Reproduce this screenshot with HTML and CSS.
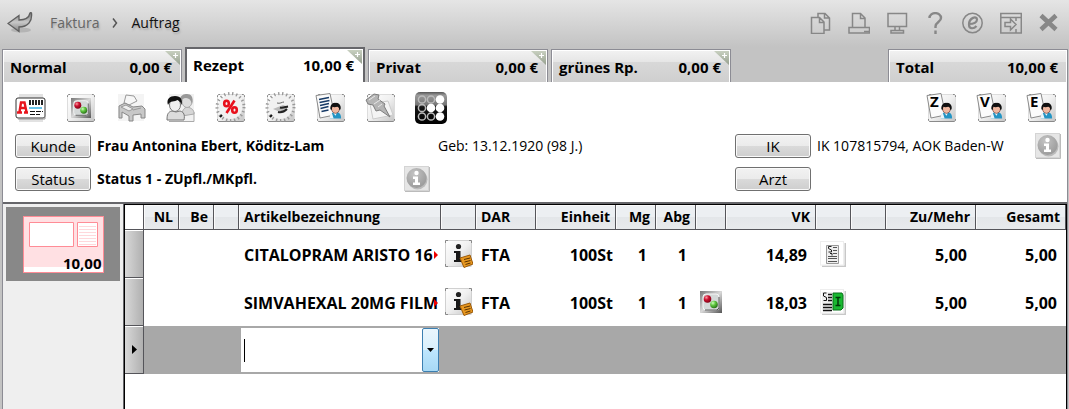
FILE: index.html
```html
<!DOCTYPE html>
<html lang="de">
<head>
<meta charset="utf-8">
<title>Faktura – Auftrag</title>
<link rel="stylesheet" href="styles.css">
</head>
<body>
<svg class="defs" aria-hidden="true">
  <defs>
    <linearGradient id="g-tile" x1="0" y1="0" x2="1" y2="1"><stop offset="0" stop-color="#fff"/><stop offset=".5" stop-color="#f0f0f0"/><stop offset="1" stop-color="#c4c4c4"/></linearGradient>
    <linearGradient id="g-metal" x1="0" y1="0" x2="1" y2="1"><stop offset="0" stop-color="#777"/><stop offset=".5" stop-color="#d8d8d8"/><stop offset="1" stop-color="#555"/></linearGradient>
    <linearGradient id="g-arrow" x1="0" y1="0" x2="0" y2="1"><stop offset="0" stop-color="#777"/><stop offset=".5" stop-color="#c8c8c8"/><stop offset="1" stop-color="#858585"/></linearGradient>
    <linearGradient id="g-black" x1="0" y1="0" x2="0" y2="1"><stop offset="0" stop-color="#555"/><stop offset=".1" stop-color="#999"/><stop offset=".4" stop-color="#777"/><stop offset=".46" stop-color="#161616"/><stop offset="1" stop-color="#000"/></linearGradient>
    <linearGradient id="g-corner" x1="0" y1="0" x2="0" y2="1"><stop offset="0" stop-color="#c8d0c0"/><stop offset="1" stop-color="#96a08f"/></linearGradient>
    <radialGradient id="g-red" cx=".35" cy=".3" r=".8"><stop offset="0" stop-color="#ff9aa0"/><stop offset=".4" stop-color="#cc1030"/><stop offset="1" stop-color="#700010"/></radialGradient>
    <radialGradient id="g-green" cx=".35" cy=".3" r=".8"><stop offset="0" stop-color="#d0ffc0"/><stop offset=".4" stop-color="#60c840"/><stop offset="1" stop-color="#206010"/></radialGradient>
    <radialGradient id="g-grey" cx=".4" cy=".3" r=".8"><stop offset="0" stop-color="#c4c4c4"/><stop offset="1" stop-color="#969696"/></radialGradient>
    <symbol id="tile" viewBox="0 0 32 32">
      <rect x="2.500" y="2.500" width="27" height="27" rx="2" fill="url(#g-tile)" stroke="#ddd"/>
      <path d="M2.500 5V3.500l1-1H5M27 2.500h1.500l1 1V5M2.500 27v1.500l1 1H28l1.500-1V27" fill="none" stroke="#8a8a8a"/>
    </symbol>
    <symbol id="pills" viewBox="0 0 22 22">
      <rect width="22" height="22" fill="url(#g-metal)"/>
      <rect x="3" y="3" width="16" height="16" rx="3" fill="#d4d8d8" stroke="#f6f6f6"/>
      <path d="M5 19h12l2-2V6" fill="none" stroke="#555"/>
      <circle cx="7.500" cy="8" r="3.800" fill="url(#g-red)"/><circle cx="14" cy="13.500" r="3.800" fill="url(#g-green)"/>
    </symbol>
    <symbol id="burst" viewBox="0 0 32 32">
      <use href="#tile"/>
      <circle cx="15.500" cy="15" r="13" fill="none" stroke="#999" stroke-width="4" stroke-dasharray="1.300 2.600"/>
      <circle cx="15.500" cy="15" r="12" fill="#f1f1f1"/>
      <path d="M5 25l2-2" stroke="#111" stroke-width="2"/>
    </symbol>
    <symbol id="person" viewBox="0 0 14 18">
      <path d="M1 17c0-4 1-6 4-7h4c3 1 4 3 4 7z" fill="#2394c4"/>
      <path d="M4 10l3 4 2-4zM1 17c0-3 0-5 2-6l2 6z" fill="#e9f5fa"/>
      <ellipse cx="7" cy="6.500" rx="4.300" ry="5" fill="#f0b8a0" stroke="#4b1c18" stroke-width=".6"/>
      <path d="M1.500 7C1 2 4 0 7 0s6.500 2 5.500 7l-1.500 1c0-2-.5-3-2-3.500C7 5 5 5 3.500 4.500L3 8z" fill="#111"/>
    </symbol>
    <symbol id="sheet" viewBox="0 0 32 32">
      <use href="#tile"/>
      <path d="M1 3.500L15 1.500 19.500 23 5 26z" fill="#fbfbfb" stroke="#8a8a8a"/>
      <use href="#person" x="14" y="10.500" width="13" height="17"/>
    </symbol>
    <symbol id="info" viewBox="0 0 26 26">
      <rect x=".5" y=".5" width="24" height="24" fill="#e6e6e6" stroke="#d4d4d4"/>
      <path d="M1 25.500h24.500V1" fill="none" stroke="#bbb"/>
      <circle cx="13.500" cy="13.500" r="10" fill="#888" opacity=".45"/>
      <circle cx="12.500" cy="12" r="10" fill="url(#g-grey)"/>
      <circle cx="12.500" cy="7" r="2.200" fill="#fff"/>
      <path d="M9 10.500h5v6h2v2.500H9v-2.500h2v-3.500H9z" fill="#fff"/>
    </symbol>
    <symbol id="note" viewBox="0 0 28 28">
      <rect x=".5" y=".5" width="26" height="26" rx="1" fill="url(#g-tile)" stroke="#d0d0d0"/>
      <path d="M.5 3V.5H3M24 .5h2.500V3M.5 24v2.500H3" fill="none" stroke="#888"/>
      <circle cx="13.500" cy="6.500" r="2.600" fill="#222"/>
      <path d="M9 11h6.500v9H18v2H9v-2h2v-7H9z" fill="#181818"/>
      <path d="M15 18l10-3 3 9-9 3.500z" fill="#e89820" stroke="#9c5a08"/>
      <path d="M19 19.500l6-1.500M19.500 22l6-1.500M20.500 24.500l5-1.500" stroke="#5a3200"/>
    </symbol>
    <symbol id="plus" viewBox="0 0 15 14">
      <path d="M0 0h15v14z" fill="url(#g-corner)"/><path d="M8 4.500h5M10.500 2v5" stroke="#fff" stroke-width="1.200"/>
    </symbol>
    <symbol id="doc" viewBox="0 0 26 26">
      <path d="M2 25.500h23.500V2" fill="none" stroke="#c8c8c8" stroke-width="2"/>
      <rect x=".5" y=".5" width="23" height="23.500" fill="#fff" stroke="#eee"/>
    </symbol>
  </defs>
</svg>

<header class="topbar">
  <button class="back" aria-label="Zurück">
    <svg width="26" height="22" viewBox="0 0 26 22"><ellipse cx="14" cy="18" rx="10" ry="2.500" fill="#999" opacity=".5"/><path d="M1 11.500L12 3.500v4.500c6 0 10-2 11-7 .5-.5 1-.5 1.500 0C25.500 9 21 15 12 15v4.500z" fill="url(#g-arrow)" stroke="#5f5f5f" stroke-width="1.300"/></svg>
  </button>
  <nav class="crumbs" aria-label="Pfad">
    <a class="crumb" href="#">Faktura</a>
    <svg class="sep" width="6" height="12" viewBox="0 0 6 12" aria-hidden="true"><path d="M1 1.500L4.500 6 1 10.500" fill="none" stroke="#555" stroke-width="1.500"/></svg>
    <a class="crumb current" href="#" aria-current="page">Auftrag</a>
  </nav>
  <div class="tools">
    <button class="tool" aria-label="Kopieren"><svg width="22" height="22" viewBox="0 0 22 22"><path d="M8 5V1.500h7l4.500 4.500v12H14M14.500 1.500V6H19M1.500 5.500h8l4.500 4.500v11.500H1.500zM9.500 6v4.500H14"/></svg></button>
    <button class="tool" aria-label="Drucken"><svg width="22" height="22" viewBox="0 0 22 22"><path d="M4.500 15V1.500h8L17 6v9M12.500 2v4.500H17M1 15.500h20.500v5.500H1z"/><path d="M16 19.500h5"/></svg></button>
    <button class="tool" aria-label="Bildschirm"><svg width="22" height="22" viewBox="0 0 22 22"><path d="M2 1.500h18.500v13H2zM9 15v3M13.500 15v3M5 18.500h12.500v2.500H5z"/></svg></button>
    <button class="tool" aria-label="Hilfe"><svg width="22" height="22" viewBox="0 0 22 22"><path d="M5.500 6C5.500-.5 17-.5 17 6c0 4-5.500 4-5.500 8.500v1.500M11.500 18.500V22" stroke-width="2.400"/></svg></button>
    <button class="tool" aria-label="Internet"><svg width="22" height="22" viewBox="0 0 22 22"><circle cx="10.500" cy="11" r="9.700"/><path d="M7 12c5 0 8-2 8-4.500C15 3.500 7 5.500 7 12.500c0 5 5 4.500 7.500 1.500" stroke-width="2.200"/></svg></button>
    <button class="tool" aria-label="Fenster wechseln"><svg width="22" height="22" viewBox="0 0 22 22"><path d="M.8 1.500h20.500v19.500H.8zM1 5.500h20M16 6v3M16 17v4M5 10.500h5.500V7l5.500 5.500-5.500 5.500v-3.500H5z"/></svg></button>
    <button class="tool" aria-label="Schließen"><svg width="22" height="22" viewBox="0 0 22 22"><path d="M3 3.500l15 14M18 3.500l-15 14" stroke-width="4.500"/></svg></button>
  </div>
</header>

<div class="tabs">
  <button class="tab"><span>Normal</span><span>0,00 €</span><svg class="corner" width="15" height="14"><use href="#plus"/></svg></button>
  <button class="tab active"><span>Rezept</span><span>10,00 €</span><svg class="corner" width="15" height="14"><use href="#plus"/></svg></button>
  <button class="tab"><span>Privat</span><span>0,00 €</span><svg class="corner" width="15" height="14"><use href="#plus"/></svg></button>
  <button class="tab"><span>grünes Rp.</span><span>0,00 €</span><svg class="corner" width="15" height="14"><use href="#plus"/></svg></button>
  <button class="tab total"><span>Total</span><span>10,00 €</span></button>
</div>

<main class="panel">
  <div class="actions">
    <button class="action" aria-label="Kundenkarte"><svg width="32" height="32" viewBox="0 0 32 32"><path d="M4 2h24v28H4z" fill="#e2e2e2"/><rect x="1" y="6" width="29" height="20" rx="2" fill="#fff" stroke="#333"/><path d="M3 27h27V10" fill="none" stroke="#999"/><path d="M2 20.500h5M9 20.500h4M4.500 20L6 10.500h3.500L11.500 20M6 16h5" fill="none" stroke="#e8141c" stroke-width="2.400"/><path d="M14 10.500h14" stroke="#222" stroke-width="5" stroke-dasharray="2 1"/><path d="M14 16h13" stroke="#69c3e8" stroke-width="2"/><path d="M15 19.500h13M15 22.500h10" stroke="#111" stroke-dasharray="5 1"/></svg></button>
    <button class="action" aria-label="Artikel"><svg width="32" height="32"><use href="#tile"/><use href="#pills" x="6" y="6" width="20" height="20"/></svg></button>
    <button class="action" aria-label="Krankenhaus"><svg width="32" height="32" viewBox="0 0 32 32"><rect x="3" y="2" width="26" height="27" fill="#f4f4f4"/><path d="M9 11l2-8 8 1 3 5-8 4z" fill="#f6f6f6" stroke="#999"/><path d="M4 14l6-3 8 4 9-1 3 3v9h-4v-4l-8 1v6h-4v-5l-7-4v6H4z" fill="#c8c8c8" stroke="#888"/><path d="M6 15l5-2 7 4-4 2zM18 18l8-2" fill="#eee" stroke="#999"/></svg></button>
    <button class="action" aria-label="Personen"><svg width="32" height="32" viewBox="0 0 32 32"><rect x="4" y="2" width="25" height="27" fill="#f1f1f1"/><path d="M4 29.500h25V20" fill="none" stroke="#aaa"/><path d="M17 24c0-6 2-8 5-9 5 1 7 3 7 7z" fill="#d6d6d6" stroke="#aaa"/><ellipse cx="22" cy="9.500" rx="5" ry="6" fill="#ddd" stroke="#aaa"/><path d="M15 8c0-5 4-6 7-6 4 0 7 3 5 10-1-4-3-6-6-6s-4 2-6 2z" fill="#999"/><path d="M2 28c0-6 1-8 5-9l4 1 4-1c4 1 5 4 4 9z" fill="#dcdcdc" stroke="#777"/><ellipse cx="10" cy="13" rx="5.500" ry="6.500" fill="#efefef" stroke="#777"/><path d="M3 13C1 7 5 4 10 4c6 0 8 4 6.500 9-1-3-2-4-4-5C10 10 5 8 3 13z" fill="#111"/></svg></button>
    <button class="action" aria-label="Rabatt"><svg width="32" height="32" viewBox="0 0 32 32"><use href="#burst"/><g fill="none" stroke="#e8101c" stroke-width="2.600"><ellipse cx="11.500" cy="11.500" rx="2.300" ry="2.800"/><ellipse cx="19.500" cy="18" rx="2.300" ry="2.800"/><path d="M19.500 8.500L11.500 21"/></g></svg></button>
    <button class="action" aria-label="Preis"><svg width="32" height="32" viewBox="0 0 32 32"><use href="#burst"/><path d="M8 17l10-4 6 2-9 5z" fill="#bbb"/><path d="M12 11c3 1 5-1 7-1" fill="none" stroke="#666"/><path d="M15 15.500c3 1 6-1 8-1M13 20c4 1 7-1 9-3" fill="none" stroke="#222" stroke-width="2"/></svg></button>
    <button class="action" aria-label="Kundendaten"><svg width="32" height="32" viewBox="0 0 32 32"><use href="#sheet"/><path d="M4 7.500l10-2M4.500 10.500l10-2M5 13.500l9-2M5.500 16.500l8-2M6.500 19.500l7-1.500" stroke="#173a66" stroke-width="1.600"/></svg></button>
    <button class="action" aria-label="Notiz anheften"><svg width="32" height="32" viewBox="0 0 32 32"><use href="#tile"/><path d="M5 12l18-3 5 14-20 4z" fill="#f4f4f4" stroke="#ccc"/><path d="M1 8l8-6 5 1-1 4 7 5-1 2 6 11-10-7-4 1-3-6-5-1z" fill="#b5b5b5" stroke="#7d7d7d"/><path d="M4 8l6-4M9 12l6-4M13 15l4-3" stroke="#e8e8e8"/></svg></button>
    <button class="action" aria-label="Blister"><svg width="32" height="32" viewBox="0 0 32 32"><rect y="0" width="32" height="32" rx="5" fill="url(#g-black)"/><g fill="none" stroke="#bbb" stroke-width="1.500"><circle cx="7" cy="7.500" r="3.600"/><circle cx="16" cy="7.500" r="3.600"/><circle cx="7" cy="16" r="3.600"/><circle cx="7" cy="24.500" r="3.600"/><circle cx="16" cy="24.500" r="3.600"/></g><g fill="#fff"><circle cx="25" cy="7.500" r="4.300"/><circle cx="16" cy="16" r="4.300"/><circle cx="25" cy="16" r="4.300"/><circle cx="25" cy="24.500" r="4.300"/></g></svg></button>
    <button class="action push" aria-label="Z-Daten"><svg class="letter" width="32" height="32" viewBox="0 0 32 32"><use href="#sheet"/><text x="4" y="15">Z</text></svg></button>
    <button class="action" aria-label="V-Daten"><svg class="letter" width="32" height="32" viewBox="0 0 32 32"><use href="#sheet"/><text x="4" y="15">V</text></svg></button>
    <button class="action" aria-label="E-Daten"><svg class="letter" width="32" height="32" viewBox="0 0 32 32"><use href="#sheet"/><text x="4" y="15">E</text></svg></button>
  </div>

  <div class="details">
    <button class="btn">Kunde</button>
    <strong class="name wide">Frau Antonina Ebert, Köditz-Lam</strong>
    <span class="text">Geb: 13.12.1920 (98 J.)</span>
    <button class="btn">IK</button>
    <span class="text">IK 107815794, AOK Baden-W</span>
    <button class="icon" aria-label="Info Krankenkasse"><svg width="26" height="26"><use href="#info"/></svg></button>
    <button class="btn">Status</button>
    <strong class="name">Status 1 - ZUpfl./MKpfl.</strong>
    <button class="icon" aria-label="Info Status"><svg width="26" height="26"><use href="#info"/></svg></button>
    <span></span>
    <button class="btn">Arzt</button>
  </div>

  <div class="work">
    <aside class="side">
      <button class="slip" aria-label="Rezept 10,00">
        <span class="paper">
          <svg width="69" height="25" viewBox="0 0 69 25"><path d="M.5.500h44v24H.5zM48.500.500h20v24h-20z" fill="#fff" stroke="#ff8c96"/><path d="M50 4.500h17M50 7.500h17M50 10.500h17M50 13.500h17M50 16.500h17M50 19.500h17M50 22.500h17" stroke="#ffd8dc"/></svg>
          <span class="sum">10,00</span>
        </span>
      </button>
    </aside>
    <div class="sheet">
      <table class="items">
        <colgroup><col class="w-head"><col class="w-s"><col class="w-s"><col class="w-xs"><col><col class="w-s"><col class="w-dar"><col class="w-unit"><col class="w-qty"><col class="w-qty"><col class="w-pill"><col class="w-sum"><col class="w-s"><col class="w-s"><col class="w-sum"><col class="w-sum"></colgroup>
        <thead>
          <tr><th class="first"></th><th class="r">NL</th><th class="r">Be</th><th></th><th>Artikelbezeichnung</th><th></th><th>DAR</th><th class="r">Einheit</th><th class="r">Mg</th><th class="r">Abg</th><th></th><th class="r">VK</th><th></th><th></th><th class="r">Zu/Mehr</th><th class="r">Gesamt</th></tr>
        </thead>
        <tbody>
          <tr><td class="rowhead"></td><td></td><td></td><td></td><td class="article"><div class="clip">CITALOPRAM ARISTO 16</div></td><td class="ic"><svg width="28" height="28"><use href="#note"/></svg></td><td>FTA</td><td class="r unit">100St</td><td class="r">1</td><td class="r">1</td><td></td><td class="r">14,89</td><td class="ic"><svg width="26" height="26" viewBox="0 0 26 26"><use href="#doc"/><path d="M6.500 4.500h12v18h-12z" fill="#eee" stroke="#999"/><path d="M8 17.500h9M8 20.500h9M8 15.500h9M13 6.500h4M13 9.500h4M13 12.500h4" stroke="#555"/><path d="M11.500 5.500H8.500v2l3 1.500v2H8.500M10 12.500h2v2" fill="none" stroke="#222"/></svg></td><td></td><td class="r">5,00</td><td class="r">5,00</td></tr>
          <tr><td class="rowhead"></td><td></td><td></td><td></td><td class="article"><div class="clip">SIMVAHEXAL 20MG FILM</div></td><td class="ic"><svg width="28" height="28"><use href="#note"/></svg></td><td>FTA</td><td class="r unit">100St</td><td class="r">1</td><td class="r">1</td><td class="ic"><svg width="22" height="22"><use href="#pills"/></svg></td><td class="r">18,03</td><td class="ic"><svg width="26" height="26" viewBox="0 0 26 26"><use href="#doc"/><path d="M2 3h11v19H2z" fill="#eee"/><path d="M3 15.500h9M3 18.500h9M3 21.500h9M8 5.500h4M8 8.500h4M8 11.500h4" stroke="#111" stroke-width="1.500"/><path d="M6.500 4H3.500v3l3 1.500v3H3.500" fill="none" stroke="#111"/><path d="M13 4h9l1 2v13l-2 2h-8z" fill="#18b830" stroke="#08701a"/><path d="M15.500 8.500h5M18 8.500v8M15.500 16.500h5" stroke="#003808" stroke-width="1.500"/></svg></td><td></td><td class="r">5,00</td><td class="r">5,00</td></tr>
          <tr class="entry"><td class="rowhead"><svg width="5" height="9" viewBox="0 0 5 9"><path d="M0 0l5 4.500L0 9z"/></svg></td><td></td><td></td><td></td><td class="combo-cell"><div class="combo"><span class="caret"></span><input class="field" type="text" aria-label="Artikelbezeichnung"><button class="drop" aria-label="Liste öffnen"><svg width="7" height="4" viewBox="0 0 7 4"><path d="M0 0h7L3.500 4z"/></svg></button></div></td><td></td><td></td><td></td><td></td><td></td><td></td><td></td><td></td><td></td><td></td><td></td></tr>
        </tbody>
      </table>
    </div>
  </div>
</main>
</body>
</html>
```
FILE: styles.css
```css
* { box-sizing: border-box; }

body {
  margin: 0;
  min-height: 100vh;
  display: flex;
  flex-direction: column;
  background: #c3c3c3;
  color: #000;
  font: 15px/20px "Open Sans", "Noto Sans", sans-serif;
}

button {
  margin: 0;
  padding: 0;
  border: 0;
  background: none;
  color: inherit;
  font: inherit;
}

svg { display: block; }
.defs { position: absolute; width: 0; height: 0; }

/* Top bar */
.topbar {
  display: flex;
  align-items: center;
  height: 47px;
  padding: 0 1px 2px 7px;
  background: linear-gradient(#e5e5e5, #c3c3c3);
}
.crumbs {
  display: flex;
  align-items: center;
  gap: 13px;
  margin-left: 17px;
  font-size: 14px;
  text-shadow: 1px 2px 2px #aaa;
}
.crumb { color: #666; text-decoration: none; }
.crumb.current { color: #111; }
.tools { display: flex; margin-left: auto; }
.tool { display: grid; place-items: center; width: 38px; height: 22px; }
.tool svg { fill: none; stroke: #878787; stroke-width: 1.5; }

/* Tabs */
.tabs {
  display: flex;
  align-items: flex-end;
  gap: 3px;
  padding: 0 1px 0 2px;
}
.tab {
  position: relative;
  display: flex;
  justify-content: space-between;
  flex: 0 1 180px;
  height: 33px;
  padding: 7px 9px 0 7px;
  border: 1px solid #8c8c94;
  border-bottom: 0;
  box-shadow: inset 1px 1px #fff, inset -1px 0 #fff;
  background: linear-gradient(#f2f2f2, #e6e6e6 36%, #d8d8d8 37%, #cfcfcf);
  font-weight: 700;
  white-space: nowrap;
}
.tab.active {
  height: 35px;
  padding: 6px 9px 0 6px;
  border: 2px solid #66666a;
  border-bottom: 0;
  background: #fff;
}
.tab.total { margin-left: auto; }
.corner { position: absolute; top: 1px; right: 1px; }

/* Panel */
.panel {
  flex: 1;
  display: flex;
  flex-direction: column;
  margin: 0 1px 0 2px;
  border: solid #8c8c94;
  border-width: 0 1px;
  background: #fff;
}
.actions {
  display: flex;
  gap: 18px;
  padding: 10px 9px 9px 12px;
}
.push { margin-left: auto; }
.letter text { font: 700 15px "Open Sans", sans-serif; }

.details {
  display: grid;
  grid-template-columns: 76px 301px 28px 1fr 76px 212px 26px;
  grid-auto-rows: 26px;
  gap: 7px 6px;
  align-items: center;
  padding: 0 6px 10px 12px;
  white-space: nowrap;
}
.wide { grid-column: span 2; }
.text { font-size: 14px; }
.name { font-size: 14px; font-weight: 700; }
.btn {
  height: 24px;
  border: 1px solid #707070;
  border-radius: 3px;
  box-shadow: inset 0 0 0 1px #fafafa;
  background: linear-gradient(#f2f2f2, #ebebeb 50%, #dadada 51%, #cecece);
}

/* Work area */
.work {
  flex: 1;
  display: flex;
  border-top: 2px solid #66666a;
}
.side {
  flex: none;
  width: 121px;
  padding: 3px;
  border-right: 1px solid #66666a;
  background: #efefef;
}
.slip {
  display: grid;
  place-items: center;
  width: 114px;
  height: 74px;
  background: #888;
}
.paper {
  display: flex;
  flex-direction: column;
  justify-content: space-between;
  width: 81px;
  height: 57px;
  padding: 5px 0 0 5px;
  border: 1px solid #ff8c96;
  background: linear-gradient(#ffe0e3 50px, #fff 50px);
}
.sum {
  padding-right: 1px;
  font-size: 15px;
  font-weight: 700;
  line-height: 17px;
  text-align: right;
}
.sheet {
  flex: 1;
  min-width: 0;
  border: solid #000;
  border-width: 1px 1px 0;
}

.items {
  width: 100%;
  table-layout: fixed;
  border-spacing: 0;
  font-size: 16px;
  font-weight: 700;
}
.w-head { width: 19px; }
.w-xs { width: 25px; }
.w-s { width: 35px; }
.w-dar { width: 60px; }
.w-unit { width: 80px; }
.w-qty { width: 40px; }
.w-pill { width: 30px; }
.w-sum { width: 90px; }

.items th {
  height: 25px;
  padding: 0 5px;
  border: solid #55555a;
  border-width: 0 1px 1px 0;
  box-shadow: inset 1px 1px #fafafa;
  background: linear-gradient(#eceff2 50%, #e3e6e9 51%, #e8eaec);
  font-size: 14px;
  text-align: left;
}
.items th.first { background: #fff; }
.items td { height: 48px; padding: 2px 5px 0; }
.items .r { text-align: right; }
.items td.r { padding-right: 9px; }
.items td.unit { padding-right: 3px; }
.items td.ic { padding: 0 0 0 4px; }
.items td.rowhead {
  padding: 0 0 0 7px;
  border: solid #55555a;
  border-width: 0 1px 1px 0;
  box-shadow: inset 0 1px #fff;
  background: linear-gradient(90deg, #d8d8d8, #b0b0b0);
}
.items td.article { padding-right: 3px; }
.clip {
  position: relative;
  overflow: hidden;
  white-space: nowrap;
}
.clip::after {
  content: "";
  position: absolute;
  top: 6px;
  right: 0;
  border: solid transparent;
  border-width: 4px 0 4px 4px;
  border-left-color: #e00;
}
.entry { background: #a8a8a8; }
.items td.combo-cell { padding: 2px; }
.combo {
  display: flex;
  align-items: center;
  height: 44px;
  padding-left: 3px;
  background: #fff;
}
.caret { width: 1px; height: 23px; background: #000; }
.field {
  flex: 1;
  min-width: 0;
  height: 40px;
  padding: 0;
  border: 0;
  outline: 0;
  background: none;
  font: inherit;
}
.drop {
  display: grid;
  place-items: center;
  width: 17px;
  height: 44px;
  border: 1px solid #3c7fb1;
  border-radius: 2px;
  background: linear-gradient(#eaf6fd, #d9f0fc 50%, #bee6fd 51%, #a7d9f5);
}
```
